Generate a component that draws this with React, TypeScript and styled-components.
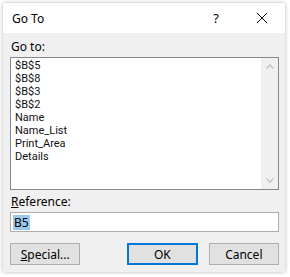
import styled, { createGlobalStyle } from "styled-components";

const GlobalStyle = createGlobalStyle`
  html, body {
    margin: 0;
    padding: 0;
    background: #ffffff;
  }
  body {
    font-family: "Noto Sans", "Liberation Sans", sans-serif;
    font-size: 12px;
    color: #000;
  }
`;

const Window = styled.div`
  margin: 3px;
  width: 282px;
  height: 269px;
  background: #f0f0f0;
  box-shadow: 0 0 4px rgba(0, 0, 0, 0.3);
  display: flex;
  flex-direction: column;
`;

const TitleBar = styled.div`
  height: 30px;
  background: #ffffff;
  display: flex;
  align-items: center;
  padding-left: 9px;
`;

const Title = styled.span`
  flex: 1;
  font-size: 12px;
`;

const TitleButton = styled.div`
  width: 46px;
  height: 30px;
  display: flex;
  align-items: center;
  justify-content: center;
  font-size: 13px;
`;

const Body = styled.div`
  flex: 1;
  display: flex;
  flex-direction: column;
  padding: 4px 6px 0 7px;
`;

const Label = styled.div`
  height: 20px;
  line-height: 20px;
  padding-left: 1px;
  u {
    text-decoration: underline;
  }
`;

const ListBox = styled.div`
  height: 131px;
  border: 1px solid #828790;
  background: #ffffff;
  display: flex;
`;

const Items = styled.div`
  flex: 1;
  padding: 1px 0 0 4px;
  display: flex;
  flex-direction: column;
`;

const Item = styled.div`
  height: 13px;
  line-height: 13px;
  font-family: Roboto, "Noto Sans", sans-serif;
  font-size: 11px;
  color: #111;
`;

const ScrollBar = styled.div`
  width: 17px;
  background: #f0f0f0;
  display: flex;
  flex-direction: column;
  justify-content: space-between;
  align-items: center;
  padding: 6px 0;
`;

const RefLabel = styled(Label)`
  margin-top: 2px;
`;

const Input = styled.div`
  height: 18px;
  border: 1px solid #adadad;
  background: #ffffff;
  display: flex;
  align-items: center;
  padding-left: 2px;
`;

const Selected = styled.span`
  background: #99c9ef;
  line-height: 15px;
  padding: 0 1px;
`;

const ButtonRow = styled.div`
  display: flex;
  margin-top: 11px;
  gap: 11px;
`;

const Button = styled.div<{ $primary?: boolean }>`
  width: 74px;
  height: 22px;
  box-sizing: border-box;
  background: #e1e1e1;
  border: ${(p) => (p.$primary ? "2px solid #0078d7" : "1px solid #adadad")};
  display: flex;
  align-items: center;
  justify-content: center;
`;

const Spacer = styled.div`
  width: 26px;
`;

function Chevron({ up }: { up?: boolean }) {
  return (
    <svg width="8" height="5" viewBox="0 0 8 5">
      <path
        d={up ? "M0.5 4.5 L4 1 L7.5 4.5" : "M0.5 0.5 L4 4 L7.5 0.5"}
        fill="none"
        stroke="#c2c2c2"
        strokeWidth="1.4"
      />
    </svg>
  );
}

const items = [
  "$B$5",
  "$B$8",
  "$B$3",
  "$B$2",
  "Name",
  "Name_List",
  "Print_Area",
  "Details",
];

export default function App() {
  return (
    <>
      <GlobalStyle />
      <Window>
        <TitleBar>
          <Title>Go To</Title>
          <TitleButton>?</TitleButton>
          <TitleButton>
            <svg width="10" height="10" viewBox="0 0 10 10">
              <path d="M0 0 L10 10 M10 0 L0 10" stroke="#000" strokeWidth="1" />
            </svg>
          </TitleButton>
        </TitleBar>
        <Body>
          <Label>Go to:</Label>
          <ListBox>
            <Items>
              {items.map((it) => (
                <Item key={it}>{it}</Item>
              ))}
            </Items>
            <ScrollBar>
              <Chevron up />
              <Chevron />
            </ScrollBar>
          </ListBox>
          <RefLabel>
            <u>R</u>eference:
          </RefLabel>
          <Input>
            <Selected>B5</Selected>
          </Input>
          <ButtonRow>
            <Button>
              <span>
                <u>S</u>pecial...
              </span>
            </Button>
            <Spacer />
            <Button $primary>OK</Button>
            <Button>Cancel</Button>
          </ButtonRow>
        </Body>
      </Window>
    </>
  );
}
